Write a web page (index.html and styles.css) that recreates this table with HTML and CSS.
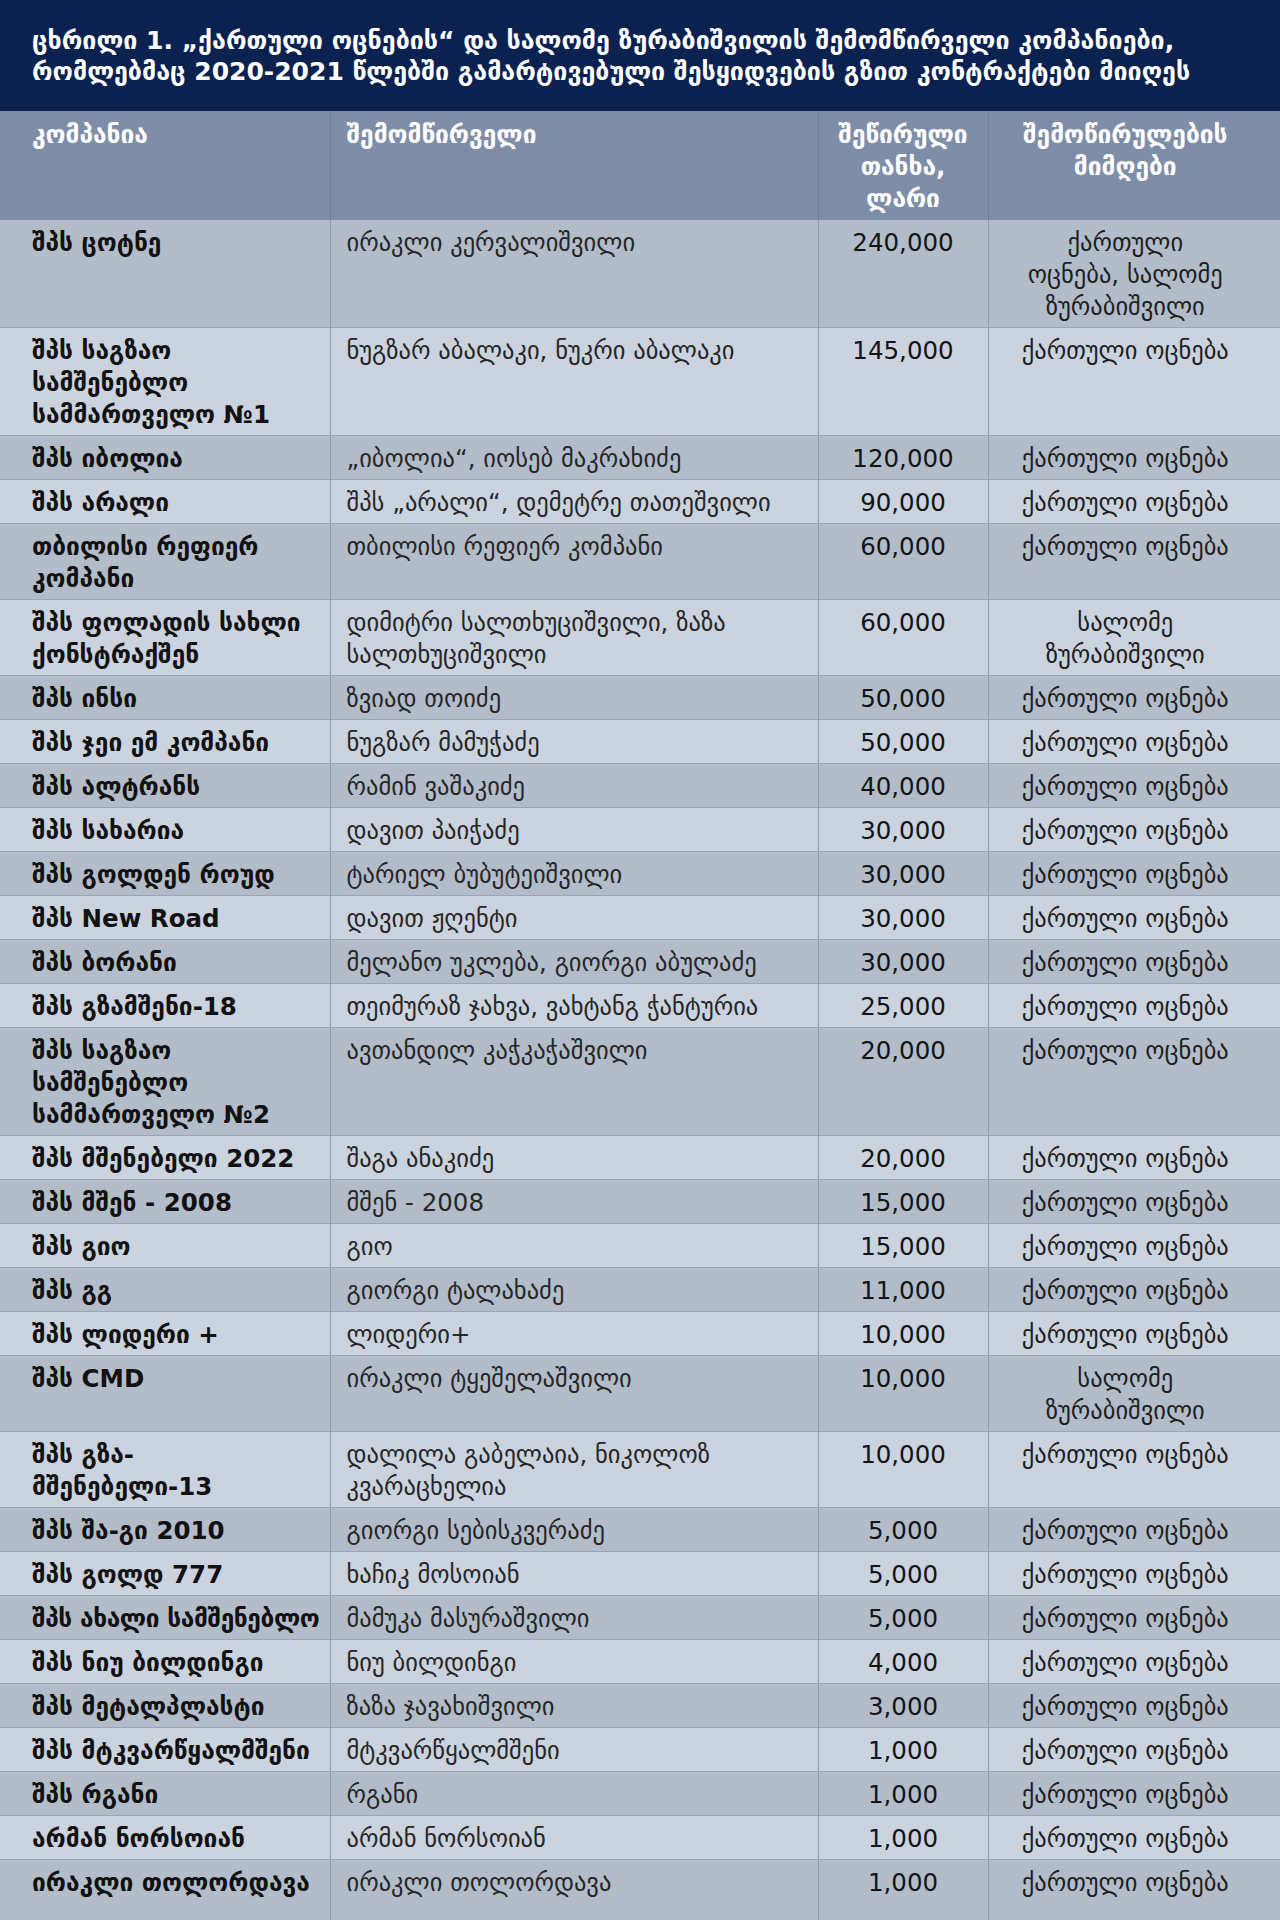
FILE: index.html
```html
<!DOCTYPE html>
<html lang="ka">
<head>
<meta charset="utf-8">
<title>ცხრილი 1</title>
<link rel="stylesheet" href="styles.css">
</head>
<body>
<div class="page">
  <h1 class="title">ცხრილი 1. „ქართული ოცნების“ და სალომე ზურაბიშვილის შემომწირველი კომპანიები, რომლებმაც 2020-2021 წლებში გამარტივებული შესყიდვების გზით კონტრაქტები მიიღეს</h1>
  <table class="grid">
    <colgroup>
      <col class="c1"><col class="c2"><col class="c3"><col class="c4">
    </colgroup>
    <thead>
      <tr>
        <th class="company">კომპანია</th>
        <th class="donor">შემომწირველი</th>
        <th class="amount">შეწირული თანხა, ლარი</th>
        <th class="recipient">შემოწირულების მიმღები</th>
      </tr>
    </thead>
    <tbody>
      <tr><td class="company">შპს ცოტნე</td><td class="donor">ირაკლი კერვალიშვილი</td><td class="amount">240,000</td><td class="recipient">ქართული ოცნება, სალომე ზურაბიშვილი</td></tr>
      <tr><td class="company">შპს საგზაო სამშენებლო სამმართველო №1</td><td class="donor">ნუგზარ აბალაკი, ნუკრი აბალაკი</td><td class="amount">145,000</td><td class="recipient">ქართული ოცნება</td></tr>
      <tr><td class="company">შპს იბოლია</td><td class="donor">„იბოლია“, იოსებ მაკრახიძე</td><td class="amount">120,000</td><td class="recipient">ქართული ოცნება</td></tr>
      <tr><td class="company">შპს არალი</td><td class="donor">შპს „არალი“, დემეტრე თათეშვილი</td><td class="amount">90,000</td><td class="recipient">ქართული ოცნება</td></tr>
      <tr><td class="company">თბილისი რეფიერ კომპანი</td><td class="donor">თბილისი რეფიერ კომპანი</td><td class="amount">60,000</td><td class="recipient">ქართული ოცნება</td></tr>
      <tr><td class="company">შპს ფოლადის სახლი ქონსტრაქშენ</td><td class="donor">დიმიტრი სალთხუციშვილი, ზაზა სალთხუციშვილი</td><td class="amount">60,000</td><td class="recipient">სალომე ზურაბიშვილი</td></tr>
      <tr><td class="company">შპს ინსი</td><td class="donor">ზვიად თოიძე</td><td class="amount">50,000</td><td class="recipient">ქართული ოცნება</td></tr>
      <tr><td class="company">შპს ჯეი ემ კომპანი</td><td class="donor">ნუგზარ მამუჭაძე</td><td class="amount">50,000</td><td class="recipient">ქართული ოცნება</td></tr>
      <tr><td class="company">შპს ალტრანს</td><td class="donor">რამინ ვაშაკიძე</td><td class="amount">40,000</td><td class="recipient">ქართული ოცნება</td></tr>
      <tr><td class="company">შპს სახარია</td><td class="donor">დავით პაიჭაძე</td><td class="amount">30,000</td><td class="recipient">ქართული ოცნება</td></tr>
      <tr><td class="company">შპს გოლდენ როუდ</td><td class="donor">ტარიელ ბუბუტეიშვილი</td><td class="amount">30,000</td><td class="recipient">ქართული ოცნება</td></tr>
      <tr><td class="company">შპს New Road</td><td class="donor">დავით ჟღენტი</td><td class="amount">30,000</td><td class="recipient">ქართული ოცნება</td></tr>
      <tr><td class="company">შპს ბორანი</td><td class="donor">მელანო უკლება, გიორგი აბულაძე</td><td class="amount">30,000</td><td class="recipient">ქართული ოცნება</td></tr>
      <tr><td class="company">შპს გზამშენი-18</td><td class="donor">თეიმურაზ ჯახვა, ვახტანგ ჭანტურია</td><td class="amount">25,000</td><td class="recipient">ქართული ოცნება</td></tr>
      <tr><td class="company">შპს საგზაო სამშენებლო სამმართველო №2</td><td class="donor">ავთანდილ კაჭკაჭაშვილი</td><td class="amount">20,000</td><td class="recipient">ქართული ოცნება</td></tr>
      <tr><td class="company">შპს მშენებელი 2022</td><td class="donor">შაგა ანაკიძე</td><td class="amount">20,000</td><td class="recipient">ქართული ოცნება</td></tr>
      <tr><td class="company">შპს მშენ - 2008</td><td class="donor">მშენ - 2008</td><td class="amount">15,000</td><td class="recipient">ქართული ოცნება</td></tr>
      <tr><td class="company">შპს გიო</td><td class="donor">გიო</td><td class="amount">15,000</td><td class="recipient">ქართული ოცნება</td></tr>
      <tr><td class="company">შპს გგ</td><td class="donor">გიორგი ტალახაძე</td><td class="amount">11,000</td><td class="recipient">ქართული ოცნება</td></tr>
      <tr><td class="company">შპს ლიდერი +</td><td class="donor">ლიდერი+</td><td class="amount">10,000</td><td class="recipient">ქართული ოცნება</td></tr>
      <tr><td class="company">შპს CMD</td><td class="donor">ირაკლი ტყეშელაშვილი</td><td class="amount">10,000</td><td class="recipient">სალომე ზურაბიშვილი</td></tr>
      <tr><td class="company">შპს გზა-<br>მშენებელი-13</td><td class="donor">დალილა გაბელაია, ნიკოლოზ კვარაცხელია</td><td class="amount">10,000</td><td class="recipient">ქართული ოცნება</td></tr>
      <tr><td class="company">შპს შა-გი 2010</td><td class="donor">გიორგი სებისკვერაძე</td><td class="amount">5,000</td><td class="recipient">ქართული ოცნება</td></tr>
      <tr><td class="company">შპს გოლდ 777</td><td class="donor">ხაჩიკ მოსოიან</td><td class="amount">5,000</td><td class="recipient">ქართული ოცნება</td></tr>
      <tr><td class="company tight">შპს ახალი სამშენებლო</td><td class="donor">მამუკა მასურაშვილი</td><td class="amount">5,000</td><td class="recipient">ქართული ოცნება</td></tr>
      <tr><td class="company">შპს ნიუ ბილდინგი</td><td class="donor">ნიუ ბილდინგი</td><td class="amount">4,000</td><td class="recipient">ქართული ოცნება</td></tr>
      <tr><td class="company">შპს მეტალპლასტი</td><td class="donor">ზაზა ჯავახიშვილი</td><td class="amount">3,000</td><td class="recipient">ქართული ოცნება</td></tr>
      <tr><td class="company">შპს მტკვარწყალმშენი</td><td class="donor">მტკვარწყალმშენი</td><td class="amount">1,000</td><td class="recipient">ქართული ოცნება</td></tr>
      <tr><td class="company">შპს რგანი</td><td class="donor">რგანი</td><td class="amount">1,000</td><td class="recipient">ქართული ოცნება</td></tr>
      <tr><td class="company">არმან ნორსოიან</td><td class="donor">არმან ნორსოიან</td><td class="amount">1,000</td><td class="recipient">ქართული ოცნება</td></tr>
      <tr class="last"><td class="company">ირაკლი თოლორდავა</td><td class="donor">ირაკლი თოლორდავა</td><td class="amount">1,000</td><td class="recipient">ქართული ოცნება</td></tr>
    </tbody>
  </table>
</div>
</body>
</html>
```
FILE: styles.css
```css
html, body {
  margin: 0;
  padding: 0;
  background: #b3bdca;
}
body {
  font-family: "DejaVu Sans", "Noto Sans", sans-serif;
  color: #141414;
}
.page {
  width: 1280px;
}
.title {
  margin: 0;
  background: #0b2251;
  color: #ffffff;
  font-size: 25px;
  line-height: 31px;
  font-weight: bold;
  padding: 25px 32px 24px 32px;
  height: 62px;
}
.grid {
  width: 1280px;
  border-collapse: collapse;
  table-layout: fixed;
  font-size: 24.5px;
  line-height: 32px;
}
.c1 { width: 330px; }
.c2 { width: 488px; }
.c3 { width: 170px; }
.c4 { width: 292px; }
.grid th,
.grid td {
  vertical-align: top;
  padding: 7px 16px 4px 16px;
  border: 1px solid #9aa5b7;
}
.grid th {
  background: #7f8ea8;
  color: #ffffff;
  font-weight: bold;
  padding-top: 8px;
  border-top: none;
  border-bottom-color: #7f8ea8;
  border-left-color: #6e7e99;
  border-right-color: #6e7e99;
}
.grid th:first-child,
.grid td:first-child {
  padding-left: 32px;
  padding-right: 4px;
  border-left: none;
}
.grid th:last-child,
.grid td:last-child {
  padding-left: 32px;
  padding-right: 50px;
  border-right: none;
}
.grid th.company,
.grid th.donor {
  text-align: left;
}
.grid th.amount,
.grid th.recipient {
  text-align: center;
}
.grid tbody tr:nth-child(odd) td {
  background: #b3bdca;
}
.grid tbody tr:nth-child(even) td {
  background: #cbd3de;
}
.grid td {
  border-left-color: #909cb0;
  border-right-color: #909cb0;
}
.grid td.company {
  font-weight: bold;
  color: #111111;
}
.grid td.tight {
  white-space: nowrap;
  letter-spacing: -0.4px;
}
.grid td.donor {
  color: #262626;
}
.grid td.amount {
  text-align: center;
  color: #141414;
}
.grid td.recipient {
  text-align: center;
  color: #1e1e1e;
}
.grid tr.last td {
  padding-bottom: 60px;
  border-bottom: none;
}
```
